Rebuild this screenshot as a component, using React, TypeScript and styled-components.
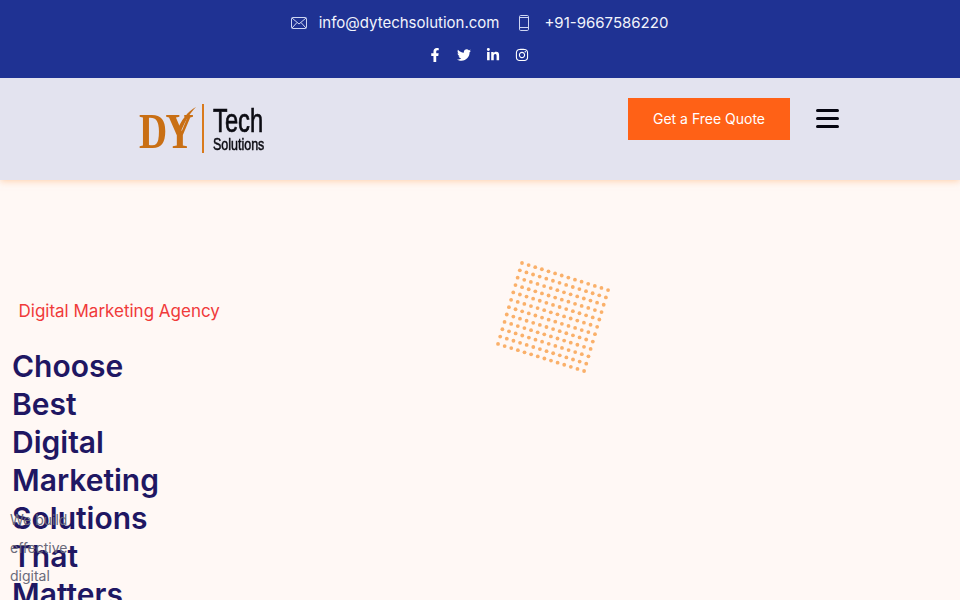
import React from "react";
import styled, { createGlobalStyle } from "styled-components";
import { FaFacebookF, FaTwitter, FaLinkedinIn, FaInstagram } from "react-icons/fa";

const Global = createGlobalStyle`
  html, body { margin: 0; padding: 0; height: 600px; overflow: hidden; background: #fff8f5; font-family: Inter, "Liberation Sans", sans-serif; }
  * { box-sizing: border-box; }
`;
const Page = styled.div`width: 960px; height: 600px; overflow: hidden; display: flex; flex-direction: column;`;
const TopBar = styled.div`
  height: 78px; background: #1f3293; color: #fff; display: flex; flex-direction: column; align-items: center; padding-top: 13px;
  position: relative; z-index: 2;
`;
const ContactRow = styled.div`display: flex; align-items: center; height: 20px; font-size: 15px; line-height: 20px; margin-right: 1px;`;
const ContactItem = styled.a<{ $gap?: number }>`
  display: flex; align-items: center; color: #f2f4fc; margin-right: ${(p) => p.$gap ?? 0}px;
`;
const ContactIcon = styled.svg`
  width: 16px; height: 16px; margin-right: 12px; fill: none; stroke: #cfd6f2; stroke-width: 1;
`;
const SocialRow = styled.div`display: flex; align-items: center; gap: 15px; margin: 12px 3px 0 0; height: 20px; font-size: 14px; color: #fff;`;
const SocialSlot = styled.span`width: 14px; display: flex; justify-content: center;`;
const Header = styled.header`
  height: 102px; background: #e3e3ef; box-shadow: 0 1px 7px rgba(255, 180, 120, 0.6); position: relative; z-index: 1;
  display: flex; padding: 20px 121px 0 139px; justify-content: space-between;
`;
const Logo = styled.div`display: flex; align-items: flex-start; height: 50px; margin-top: 6px;`;
const LogoMark = styled.div`position: relative; width: 58px; height: 50px;`;
const LogoDY = styled.span`
  position: absolute; left: 0; top: 3px; font-family: "Liberation Serif", serif; font-weight: 700; font-size: 50px; line-height: 48px;
  color: #c96f14; letter-spacing: -2px; transform: scaleX(0.78); transform-origin: left top; white-space: nowrap;
`;
const LogoSwash = styled.svg`position: absolute; left: 30px; top: 1px; width: 30px; height: 30px;`;
const LogoRule = styled.div`width: 2px; height: 49px; background: #d97a1c; margin: 0 9px 0 5px;`;
const LogoWords = styled.div`display: flex; flex-direction: column; color: #0b0b12; font-family: "Liberation Sans", sans-serif;`;
const LogoTech = styled.span`
  font-size: 33px; line-height: 32px; margin-top: 1px; transform: scaleX(0.72); transform-origin: left top; white-space: nowrap; -webkit-text-stroke: 0.7px #0b0b12;
`;
const LogoSolutions = styled.span`
  font-size: 16px; line-height: 15px; transform: scaleX(0.78); transform-origin: left top; white-space: nowrap; -webkit-text-stroke: 0.5px #0b0b12;
`;
const HeaderRight = styled.div`display: flex; align-items: flex-start;`;
const Quote = styled.button`
  width: 162px; height: 42px; background: #ff6116; color: #fff; border: 0; font-family: inherit; font-size: 14px; padding: 0 0 2px;
`;
const Burger = styled.div`
  width: 23px; margin-left: 26px; margin-top: 11px; height: 19px; display: flex; flex-direction: column; justify-content: space-between;
  & > i { display: block; height: 3px; background: #050510; border-radius: 2px; }
`;
const Hero = styled.section`flex: 1; position: relative; background: #fff8f5; padding: 120px 0 0 0;`;
const Tag = styled.div`font-size: 17px; line-height: 22px; color: #f03a3a; margin-left: 18.5px;`;
const Title = styled.h1`
  margin: 25px 0 0 12px; width: 160px; height: 159px; font-size: 30px; line-height: 38px; font-weight: 600; color: #1f1763;
`;
const Lead = styled.p`
  margin: 0 0 0 10px; width: 64px; font-size: 14px; line-height: 28px; color: #6a6a7a; position: relative;
`;
const Dots = styled.svg`position: absolute; left: 490px; top: 78px; width: 130px; height: 120px; filter: blur(0.45px);`;

const dots: { x: number; y: number }[] = [];
for (let r = 0; r < 12; r++) for (let c = 0; c < 14; c++) {
  dots.push({ x: 32 + c * 6.62 - r * 2.18, y: 5 + c * 2.08 + r * 7.36 });
}

export default function App() {
  return (
    <Page>
      <Global />
      <TopBar>
        <ContactRow>
          <ContactItem $gap={17}>
            <ContactIcon viewBox="0 0 16 16"><rect x="0.5" y="2.5" width="15" height="11" rx="1" /><path d="M1 3l7 6 7-6M1 13l5-5.5M15 13l-5-5.5" /></ContactIcon>
            info@dytechsolution.com
          </ContactItem>
          <ContactItem>
            <ContactIcon viewBox="0 0 16 16"><rect x="3.5" y="0.5" width="9" height="15" rx="1.2" /><path d="M3.5 2.5h9M3.5 12.5h9" /></ContactIcon>
            +91-9667586220
          </ContactItem>
        </ContactRow>
        <SocialRow>
          <SocialSlot><FaFacebookF /></SocialSlot>
          <SocialSlot><FaTwitter /></SocialSlot>
          <SocialSlot><FaLinkedinIn /></SocialSlot>
          <SocialSlot><FaInstagram /></SocialSlot>
        </SocialRow>
      </TopBar>
      <Header>
        <Logo>
          <LogoMark>
            <LogoDY>DY</LogoDY>
            <LogoSwash viewBox="0 0 30 30"><path d="M27 2C19 6 12 15 7 28l4 1C15 18 20 9 27 2z" fill="#c96f14" /></LogoSwash>
          </LogoMark>
          <LogoRule />
          <LogoWords>
            <LogoTech>Tech</LogoTech>
            <LogoSolutions>Solutions</LogoSolutions>
          </LogoWords>
        </Logo>
        <HeaderRight>
          <Quote>Get a Free Quote</Quote>
          <Burger><i /><i /><i /></Burger>
        </HeaderRight>
      </Header>
      <Hero>
        <Tag>Digital Marketing Agency</Tag>
        <Title>Choose Best Digital Marketing Solutions That Matters</Title>
        <Lead>We build effective digital</Lead>
        <Dots viewBox="0 0 130 120">
          {dots.map((d, i) => <circle key={i} cx={d.x} cy={d.y} r="1.9" fill="#fab06a" />)}
        </Dots>
      </Hero>
    </Page>
  );
}
